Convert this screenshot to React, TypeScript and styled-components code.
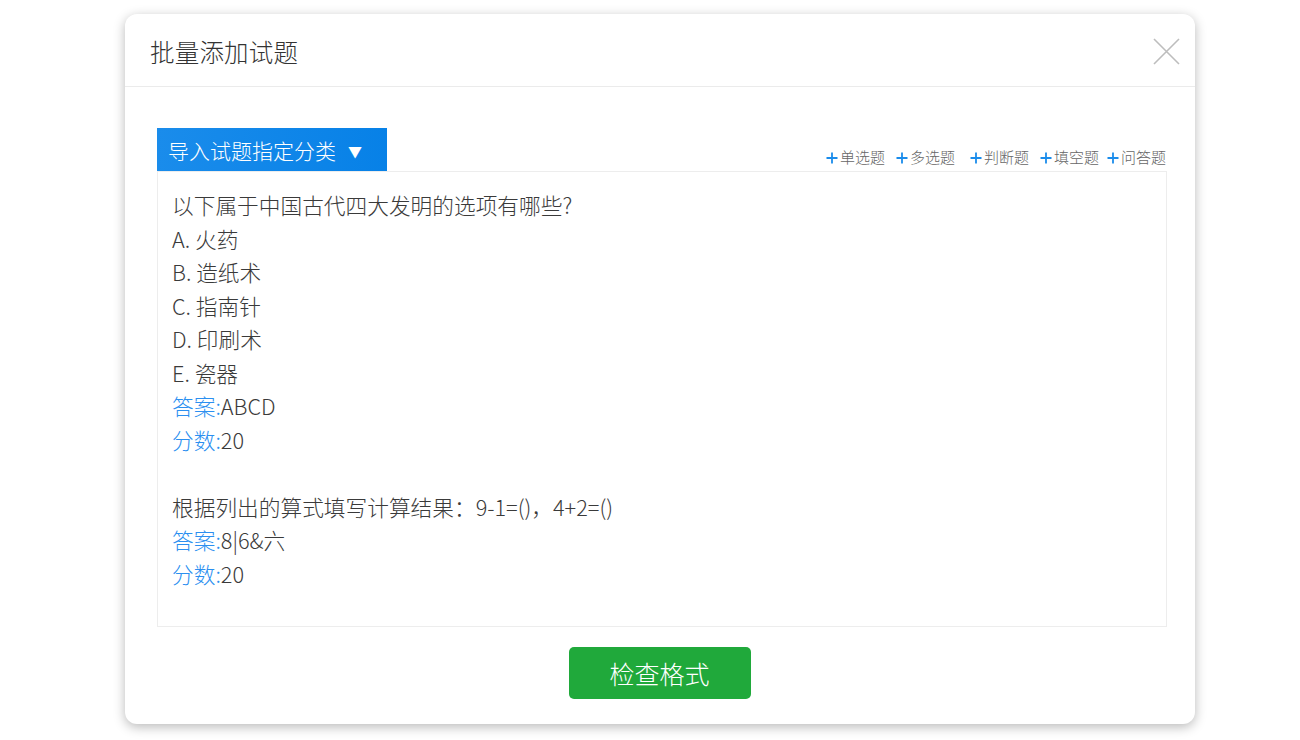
import React from "react";
import styled, { createGlobalStyle } from "styled-components";

const GlobalStyle = createGlobalStyle`
  html, body {
    margin: 0;
    padding: 0;
    background: #ffffff;
    font-family: "Noto Sans CJK SC", "Noto Sans", sans-serif;
  }
  * { box-sizing: border-box; }
`;

const Page = styled.div`
  width: 1300px;
  height: 740px;
  padding: 14px 0 0 125px;
`;

const Modal = styled.div`
  width: 1070px;
  height: 710px;
  background: #ffffff;
  border-radius: 12px;
  box-shadow: 0 3px 12px rgba(0, 0, 0, 0.28);
  display: flex;
  flex-direction: column;
`;

const Header = styled.div`
  height: 73px;
  padding: 3px 15px 0 25px;
  display: flex;
  align-items: center;
  justify-content: space-between;
  border-bottom: 1px solid #ebebeb;
`;

const Title = styled.h2`
  margin: 0;
  font-size: 24.5px;
  font-weight: 300;
  color: #333333;
  letter-spacing: 0.2px;
`;

const CloseButton = styled.button`
  width: 27px;
  height: 27px;
  padding: 0;
  border: none;
  background: transparent;
  display: flex;
  align-items: center;
  justify-content: center;
  cursor: pointer;
`;

const Body = styled.div`
  flex: 1;
  padding: 41px 28px 0 32px;
  display: flex;
  flex-direction: column;
`;

const Toolbar = styled.div`
  display: flex;
  align-items: flex-end;
  justify-content: space-between;
`;

const Dropdown = styled.button`
  height: 43px;
  width: 230px;
  padding: 0 0 0 11px;
  border: none;
  border-radius: 0;
  background: linear-gradient(90deg, #1a8ceb, #0781e7);
  color: #ffffff;
  font-family: inherit;
  font-size: 21px;
  font-weight: 300;
  display: flex;
  align-items: center;
  gap: 12px;
  cursor: pointer;
`;

const Caret = styled.span`
  font-size: 14px;
  line-height: 1;
  margin-top: 2px;
`;

const Links = styled.div`
  display: flex;
  align-items: center;
  padding: 0 1px 4px 0;
`;

const LinkItem = styled.a<{ $gap: number }>`
  margin-left: ${(p) => p.$gap}px;
  font-size: 15px;
  font-weight: 300;
  line-height: 20px;
  color: #666666;
  text-decoration: none;
  display: flex;
  align-items: center;
  cursor: pointer;
`;

const Plus = styled.svg`
  width: 12px;
  height: 12px;
  margin: 1px 2px 0 0;
  flex: none;
`;

const Editor = styled.div`
  height: 456px;
  border: 1px solid #ededed;
  padding: 16px 14px;
  font-size: 21.7px;
  font-weight: 300;
  line-height: 33.55px;
  color: #3a3a3a;
`;

const Line = styled.div`
  min-height: 33.55px;
  white-space: pre;
`;

const Label = styled.span`
  color: #2b8ff0;
`;

const Footer = styled.div`
  display: flex;
  justify-content: center;
  padding: 20px 5px 0 0;
`;

const CheckButton = styled.button`
  width: 182px;
  height: 52px;
  border: none;
  border-radius: 5px;
  background: #20a93b;
  color: #ffffff;
  font-family: inherit;
  font-size: 25px;
  font-weight: 300;
  cursor: pointer;
`;

const links = [
  { text: "单选题", gap: 0 },
  { text: "多选题", gap: 11 },
  { text: "判断题", gap: 15 },
  { text: "填空题", gap: 11 },
  { text: "问答题", gap: 8 },
];

export default function App() {
  return (
    <>
      <GlobalStyle />
      <Page>
        <Modal>
          <Header>
            <Title>批量添加试题</Title>
            <CloseButton aria-label="关闭">
              <svg width="27" height="27" viewBox="0 0 27 27">
                <path d="M1 1 L26 26 M26 1 L1 26" stroke="#bdbdbd" strokeWidth="1.6" fill="none" />
              </svg>
            </CloseButton>
          </Header>
          <Body>
            <Toolbar>
              <Dropdown>
                导入试题指定分类
                <Caret>▼</Caret>
              </Dropdown>
              <Links>
                {links.map((l) => (
                  <LinkItem key={l.text} $gap={l.gap}>
                    <Plus viewBox="0 0 12 12">
                      <path d="M6 0.5 V11.5 M0.5 6 H11.5" stroke="#1a8ceb" strokeWidth="1.8" fill="none" />
                    </Plus>
                    {l.text}
                  </LinkItem>
                ))}
              </Links>
            </Toolbar>
            <Editor>
              <Line>以下属于中国古代四大发明的选项有哪些?</Line>
              <Line>A. 火药</Line>
              <Line>B. 造纸术</Line>
              <Line>C. 指南针</Line>
              <Line>D. 印刷术</Line>
              <Line>E. 瓷器</Line>
              <Line>
                <Label>答案:</Label>ABCD
              </Line>
              <Line>
                <Label>分数:</Label>20
              </Line>
              <Line> </Line>
              <Line>根据列出的算式填写计算结果：9-1=()，4+2=()</Line>
              <Line>
                <Label>答案:</Label>8|6&amp;六
              </Line>
              <Line>
                <Label>分数:</Label>20
              </Line>
            </Editor>
            <Footer>
              <CheckButton>检查格式</CheckButton>
            </Footer>
          </Body>
        </Modal>
      </Page>
    </>
  );
}
